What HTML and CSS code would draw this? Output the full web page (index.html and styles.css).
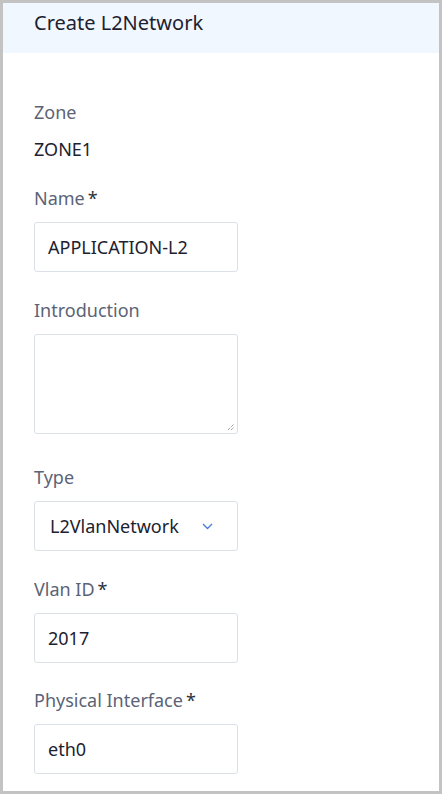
FILE: index.html
```html
<!DOCTYPE html>
<html>
<head>
<meta charset="utf-8">
<link rel="stylesheet" href="styles.css">
</head>
<body>
<div class="frame">
  <div class="header">Create L2Network</div>
  <div class="content">
    <div class="field static">
      <div class="label">Zone</div>
      <div class="value">ZONE1</div>
    </div>
    <div class="field">
      <div class="label">Name<span class="req">*</span></div>
      <div class="input">APPLICATION-L2</div>
    </div>
    <div class="field">
      <div class="label">Introduction</div>
      <div class="textarea">
        <svg class="grip" width="8" height="8" viewBox="0 0 8 8"><path d="M1 7L7 1M4 7L7 4" stroke="#777" stroke-width="1" fill="none" stroke-dasharray="1 1"/></svg>
      </div>
    </div>
    <div class="field">
      <div class="label">Type</div>
      <div class="input select">
        <span>L2VlanNetwork</span>
        <svg class="chev" width="11" height="7" viewBox="0 0 11 7"><path d="M1 1L5.5 5.5L10 1" stroke="#4a7fd0" stroke-width="1.4" fill="none"/></svg>
      </div>
    </div>
    <div class="field tight">
      <div class="label">Vlan ID<span class="req">*</span></div>
      <div class="input">2017</div>
    </div>
    <div class="field">
      <div class="label">Physical Interface<span class="req">*</span></div>
      <div class="input">eth0</div>
    </div>
  </div>
</div>
</body>
</html>
```
FILE: styles.css
```css
html, body { margin: 0; padding: 0; }
body { font-family: "Noto Sans", "Open Sans", sans-serif; background: #fff; }
.frame {
  box-sizing: border-box;
  width: 442px;
  height: 794px;
  border: 3px solid #c3c3c3;
  background: #fff;
  overflow: hidden;
}
.header {
  height: 50px;
  background: #f0f7ff;
  padding-left: 31px;
  font-size: 20px;
  line-height: 40px;
  color: #1c2230;
}
.content {
  padding: 46px 31px 0;
}
.field { display: flex; flex-direction: column; align-items: flex-start; margin-bottom: 25px; }
.field.static { margin-bottom: 23px; }
.field.tight { margin-bottom: 24px; }
.label {
  font-size: 18px;
  line-height: 26px;
  color: #5b6376;
  margin-bottom: 11px;
}
.value {
  font-size: 18px;
  line-height: 26px;
  color: #1c2230;
}
.req { color: #2a3240; margin-left: 3px; }
.input {
  box-sizing: border-box;
  width: 204px;
  height: 50px;
  border: 1px solid #dbe0e8;
  border-radius: 3px;
  padding: 0 13px;
  font-size: 18px;
  line-height: 48px;
  color: #1c2230;
}
.textarea {
  box-sizing: border-box;
  width: 204px;
  height: 100px;
  border: 1px solid #dbe0e8;
  border-radius: 3px;
  position: relative;
  margin-bottom: 5px;
}
.grip { position: absolute; right: 2px; bottom: 2px; }
.select { display: flex; align-items: center; padding-left: 15px; }
.select span { flex: 0 0 auto; }
.chev { margin-left: 23px; }
```
